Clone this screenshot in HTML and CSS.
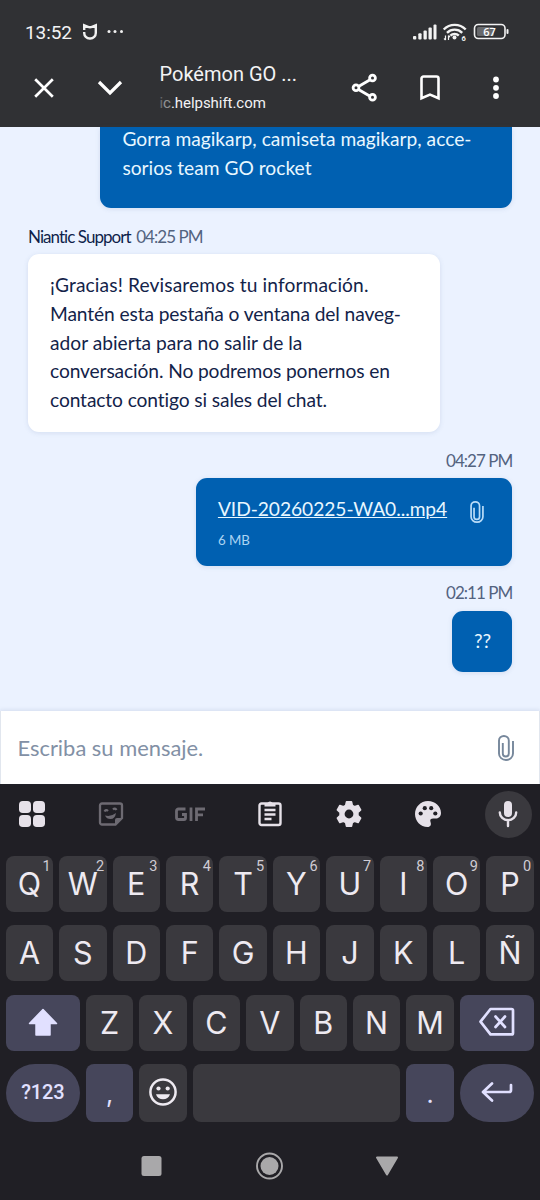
FILE: index.html
```html
<!DOCTYPE html>
<html lang="es">
<head>
<meta charset="utf-8">
<title>Pokémon GO</title>
<link rel="stylesheet" href="styles.css">
</head>
<body>
<header class="top">
  <div class="status">
    <span class="clock">13:52</span>
    <svg class="status-left" width="44" height="20" viewBox="0 0 44 20" fill="none" stroke="#f1f1f1" stroke-width="2.400"><path d="M2.200 8V3.200L6 4.800q2 .8 4 0l3.800-1.600V11a5.500 5.500 0 0 1-5.500 5.500h-.6A5.500 5.500 0 0 1 2.200 11v-1"/><g fill="#f1f1f1" stroke="none"><circle cx="27" cy="9.500" r="1.500"/><circle cx="33" cy="9.500" r="1.500"/><circle cx="39.500" cy="9.500" r="1.500"/></g></svg>
    <svg class="status-right" width="98" height="22" viewBox="0 0 98 22"><g fill="#f3f3f3"><rect x="1" y="15" width="3.300" height="3.500" rx="1"/><rect x="6.300" y="12.300" width="3.300" height="6.200" rx="1"/><rect x="11.500" y="9.500" width="3.300" height="9" rx="1"/><rect x="16.500" y="6.500" width="3.300" height="12" rx="1"/><rect x="21.500" y="3.500" width="3" height="15" rx="1"/><circle cx="42.500" cy="16.500" r="2"/></g><g fill="none" stroke="#f3f3f3" stroke-width="2.400"><path d="M31.700 8.500a15.500 15.500 0 0 1 22 0M35 11.800a10.800 10.800 0 0 1 15.200 0M38.400 14.700a6 6 0 0 1 8.400 0"/><path stroke-width="1.200" d="M33.500 14.500v4.500M32 17.500l1.500 1.500M36.500 19V14.500M38 16L36.500 14.500"/><rect x="62.500" y="3.500" width="30.500" height="14" rx="3.800" stroke-width="1.600"/></g><rect x="65" y="6" width="17" height="9" rx="1.500" fill="#68696c"/><rect x="94.500" y="8" width="2" height="5" rx="1" fill="#f3f3f3"/><text class="wifi-gen" x="49.500" y="19.500">6</text><text class="battery" x="77.500" y="14.800" text-anchor="middle">67</text></svg>
  </div>
  <div class="browser">
    <svg class="icon" width="20" height="20" viewBox="0 0 20 20" fill="none" stroke="#fff" stroke-width="2.700"><path d="M1.200 1.200l17.600 17.600M18.800 1.200L1.200 18.800"/></svg>
    <svg class="icon chevron" width="26" height="16" viewBox="0 0 26 16" fill="none" stroke="#fff" stroke-width="3.200"><path d="M2 2l11 11L24 2"/></svg>
    <div class="page-id"><div class="page-title">Pokémon GO ...</div><div class="page-host"><span class="fade-1">i</span><span class="fade-2">c</span>.helpshift.com</div></div>
    <svg class="icon share" width="28" height="30" viewBox="0 0 28 30" fill="none" stroke="#fff" stroke-width="2.800"><path d="M7.500 13.500l12-7M7.500 16.500l12 7"/><circle cx="5" cy="14.700" r="2.900"/><circle cx="21.500" cy="5" r="2.900"/><circle cx="21.500" cy="24.300" r="2.900"/></svg>
    <svg class="icon mark" width="20" height="26" viewBox="0 0 20 26" fill="none" stroke="#fff" stroke-width="2.600"><path d="M1.500 3.500a2 2 0 0 1 2-2h13a2 2 0 0 1 2 2v19.800L10 19.600l-8.500 3.700z"/></svg>
    <svg class="icon more" width="8" height="24" viewBox="0 0 8 24" fill="#fff"><circle cx="4" cy="3.500" r="2.900"/><circle cx="4" cy="11.800" r="2.900"/><circle cx="4" cy="20" r="2.900"/></svg>
  </div>
</header>

<main class="chat">
  <div class="bubble out first"><span class="line l1">Gorra magikarp, camiseta magikarp, acce-</span><span class="line">sorios team GO rocket</span></div>
  <div class="meta"><span class="author">Niantic Support</span><span class="time">04:25 PM</span></div>
  <div class="bubble in"><span class="line loose">¡Gracias! Revisaremos tu información.</span><span class="line tight">Mantén esta pestaña o ventana del naveg-</span><span class="line">ador abierta para no salir de la</span><span class="line tight">conversación. No podremos ponernos en</span><span class="line tight">contacto contigo si sales del chat.</span></div>
  <div class="meta right"><span class="time">04:27 PM</span></div>
  <div class="bubble out file">
    <div><div class="file-name">VID-20260225-WA0...mp4</div><div class="file-size">6 MB</div></div>
    <svg class="clip" width="14" height="22" viewBox="0 0 16 26" fill="none" stroke="#b9dcf8" stroke-width="2"><path d="M4.500 8v10.500a3 3 0 0 0 6.500 0V5.500a5 4.500 0 0 0-10 0v13a7 6.500 0 0 0 14 0V6"/></svg>
  </div>
  <div class="meta right second"><span class="time">02:11 PM</span></div>
  <div class="bubble out short">??</div>
</main>

<div class="composer">
  <span class="placeholder">Escriba su mensaje.</span>
  <svg width="16" height="26" viewBox="0 0 16 26" fill="none" stroke="#76879b" stroke-width="1.900"><path d="M4.800 8v10.500a3 3 0 0 0 6 0V5.500a4.900 4.500 0 0 0-9.800 0v13a7 6.500 0 0 0 14 0V6"/></svg>
</div>

<section class="keyboard">
  <div class="tools">
    <svg class="tool" width="28" height="28" viewBox="0 0 28 28" fill="#e6e1e9"><rect x="1" y="1" width="12" height="12" rx="3.800"/><rect x="15" y="1" width="12" height="12" rx="3.800"/><rect x="1" y="15" width="12" height="12" rx="3.800"/><rect x="15" y="15" width="12" height="12" rx="3.800"/></svg>
    <svg class="tool" width="28" height="28" viewBox="0 0 28 28" fill="none" stroke="#6d6a72" stroke-width="2.300"><path d="M5 3.500h18a2 2 0 0 1 2 2V18l-6.500 6.500H5a2 2 0 0 1-2-2v-17a2 2 0 0 1 2-2z"/><path d="M25 18h-5a2 2 0 0 0-2 2v5z" fill="#6d6a72" stroke="none"/><path d="M7.500 11.500q1.500-2.500 3.500-.5M16 9.500q2-2 3.500.5" stroke-width="2.200"/><path d="M8 15.500q6 1.500 11-2.500-1 6-5.500 6-4 0-5.500-3.500z" fill="#6d6a72" stroke="none"/></svg>
    <svg class="tool" width="32" height="28" viewBox="0 0 32 28" fill="none" stroke="#6d6a72" stroke-width="2.800"><path d="M11.500 9H4.500a2 2 0 0 0-2 2v6.500a2 2 0 0 0 2 2h5.500a1.500 1.500 0 0 0 1.500-1.500v-3.500H8M17 7.500v13.400M22.500 21V9H31M22.500 14.800H29"/></svg>
    <svg class="tool" width="28" height="30" viewBox="0 0 28 30" fill="none" stroke="#e6e1e9" stroke-width="2.400"><rect x="3.500" y="4.500" width="21" height="21.500" rx="2"/><path d="M8.500 11h11M8.500 15.500h11M8.500 20h7"/><path d="M8.500 4h3a2.800 2.800 0 0 1 5 0h3v3.500h-11z" fill="#e6e1e9" stroke="none"/></svg>
    <svg class="tool" width="28" height="28" viewBox="0 0 28 28"><path fill="#e6e1e9" stroke="#e6e1e9" stroke-width="1.600" stroke-linejoin="round" d="M11.500 1.800h5l.8 3.600 2.200 1.300 3.600-1.200 2.500 4.400-2.700 2.500v3.200l2.700 2.500-2.500 4.400-3.600-1.200-2.200 1.300-.8 3.600h-5l-.8-3.600-2.200-1.300-3.600 1.200-2.500-4.400 2.700-2.500v-3.200L2.400 9.900l2.500-4.400 3.600 1.200 2.200-1.300z"/><circle cx="14" cy="14" r="4.400" fill="#201f25"/></svg>
    <svg class="tool" width="28" height="28" viewBox="0 0 28 28"><path fill="#e6e1e9" d="M14 1C6.500 1 1 7 1 14s5.500 13 12.500 13c3.200 0 4-2.500 3-5-.8-2.500.3-3.500 2.800-3.500H22c3 0 5-2.500 5-5.500C27 6 21 1 14 1z"/><g fill="#201f25"><circle cx="6.700" cy="13.500" r="2.100"/><circle cx="10.800" cy="8.200" r="2.100"/><circle cx="17.200" cy="8.200" r="2.100"/><circle cx="21.300" cy="13.500" r="2.100"/></g></svg>
    <span class="mic"><svg width="22" height="30" viewBox="0 0 22 30"><rect x="7" y="2" width="8" height="16" rx="4" fill="#e6e1e9"/><path d="M2.800 13.500a8.200 7.700 0 0 0 16.400 0M11 21v6" fill="none" stroke="#e6e1e9" stroke-width="2.400" stroke-linecap="round"/></svg></span>
  </div>
  <div class="row"><b class="key">Q<i>1</i></b><b class="key">W<i>2</i></b><b class="key">E<i>3</i></b><b class="key">R<i>4</i></b><b class="key">T<i>5</i></b><b class="key">Y<i>6</i></b><b class="key">U<i>7</i></b><b class="key">I<i>8</i></b><b class="key">O<i>9</i></b><b class="key">P<i>0</i></b></div>
  <div class="row"><b class="key">A</b><b class="key">S</b><b class="key">D</b><b class="key">F</b><b class="key">G</b><b class="key">H</b><b class="key">J</b><b class="key">K</b><b class="key">L</b><b class="key">Ñ</b></div>
  <div class="row"><b class="key wide accent"><svg width="32" height="30" viewBox="0 0 32 30"><path d="M16 2.500L29.500 16.500H23V28H9V16.500H2.500z" fill="#e1e0ff" stroke="#e1e0ff" stroke-width="1.500" stroke-linejoin="round"/></svg></b><b class="key">Z</b><b class="key">X</b><b class="key">C</b><b class="key">V</b><b class="key">B</b><b class="key">N</b><b class="key">M</b><b class="key wide accent"><svg width="38" height="30" viewBox="0 0 38 30" fill="none" stroke="#e1e0ff" stroke-width="2.700" stroke-linejoin="round"><path d="M12.500 2h21a1.500 1.500 0 0 1 1.500 1.500v22.400a1.500 1.500 0 0 1-1.500 1.500h-21L2.500 14.700z"/><path d="M17.500 9.500l9.500 10.500M27 9.500L17.500 20" stroke-linecap="round"/></svg></b></div>
  <div class="row last"><b class="key wide accent pill sym">?123</b><b class="key accent punct">,</b><b class="key"><svg width="30" height="30" viewBox="0 0 30 30"><circle cx="15" cy="15" r="12.600" fill="none" stroke="#eeeaf1" stroke-width="2.500"/><g fill="#eeeaf1"><circle cx="10.500" cy="11.500" r="2.100"/><circle cx="19.700" cy="11.500" r="2.100"/><path d="M8 17.300h14c-1 3.300-3.600 5-7 5s-6-1.700-7-5z"/></g></svg></b><b class="key space"></b><b class="key accent punct">.</b><b class="key wide accent pill"><svg width="34" height="22" viewBox="0 0 34 22" fill="none" stroke="#e1e0ff" stroke-width="2.700" stroke-linecap="round" stroke-linejoin="round"><path d="M12 2.500L3 11l9 8.500M3.500 11H29a2 2 0 0 0 2-2V4"/></svg></b></div>
  <nav class="nav"><svg width="270" height="30" viewBox="0 0 270 30" fill="#a9a8aa"><rect x="6.500" y="5" width="20" height="20" rx="2.500"/><circle cx="134.500" cy="15" r="9"/><circle cx="134.500" cy="15" r="12.500" fill="none" stroke="#a9a8aa" stroke-width="1.900"/><path d="M242 6.500h20l-10 17z" stroke="#a9a8aa" stroke-width="2" stroke-linejoin="round"/></svg></nav>
</section>
</body>
</html>
```
FILE: styles.css
```css
* { box-sizing: border-box; }
body { margin: 0; width: 540px; height: 1200px; overflow: hidden; display: flex; flex-direction: column; background: #201f25; font-family: Lato, sans-serif; }
svg { display: block; flex: none; }

.top { height: 127px; background: #303134; color: #f3f3f4; font-family: Roboto, sans-serif; }
.status { height: 56px; padding: 8px 30px 0 25px; display: flex; align-items: center; }
.clock { width: 46px; font-size: 19px; letter-spacing: -.1px; white-space: nowrap; }
.status-left { margin-left: 11px; }
.status-right { margin-left: auto; }
.wifi-gen { font: 700 7.500px Roboto, sans-serif; fill: #f3f3f3; }
.battery { font: 600 11px "Open Sans", sans-serif; fill: #fff; }
.browser { height: 64px; padding-left: 34px; display: flex; align-items: center; }
.chevron { margin-left: 43px; }
.page-id { width: 160px; margin-left: 36.500px; padding-top: 1px; white-space: nowrap; }
.page-title { font-size: 20px; line-height: 30px; }
.page-host { font-size: 15px; line-height: 29px; letter-spacing: -.05px; }
.fade-1 { opacity: .3; }
.fade-2 { opacity: .5; }
.share { margin-left: 31px; }
.mark { margin-left: 41.500px; }
.more { margin-left: 52px; }

.chat { height: 584px; padding: 0 27.600px 0 28px; display: flex; flex-direction: column; background: #ebf2ff; }
.bubble { border-radius: 11px; font-size: 19.200px; line-height: 28.800px; box-shadow: 0 1px 5px rgba(70, 100, 150, .14); }
.out { align-self: flex-end; background: #0060b1; color: #e8f7ff; }
.first { width: 412px; height: 81px; padding: 0 22px; border-radius: 0 0 11px 11px; }
.line { display: block; white-space: nowrap; }
.loose { letter-spacing: .12px; }
.tight { letter-spacing: -.11px; }
.first .l1 { margin-top: -2px; }
.meta { height: 46px; padding-top: 19px; font-size: 17px; line-height: 20px; letter-spacing: -.95px; white-space: nowrap; color: #0f1f4b; }
.time { margin-left: 5.500px; color: #53637f; }
.in { width: 412px; height: 178px; padding: 17px 22px; background: #fff; color: #132349; }
.right { text-align: right; }
.file { width: 316.500px; height: 88px; padding: 17px 28.500px 0 22px; display: flex; justify-content: space-between; }
.file-name { letter-spacing: -.05px; text-decoration: underline; white-space: nowrap; }
.file-size { font-size: 13.300px; line-height: 33px; color: #acd4f3; }
.clip { margin-top: 5.500px; }
.second { height: 45px; padding-top: 17px; }
.short { width: 60px; height: 61px; line-height: 60px; letter-spacing: -.3px; text-align: center; }

.composer { height: 73px; padding: 0 25px 0 16.500px; display: flex; align-items: center; justify-content: space-between; background: #fff; border: 1px solid #e1e6ee; border-width: 0 1px; box-shadow: 0 -1px 4px rgba(80, 100, 140, .15); z-index: 1; }
.placeholder { font-size: 21.900px; color: #8290a5; }

.keyboard { height: 416px; background: #201f25; font-family: Inter, sans-serif; }
.tools { height: 72px; margin: 0 -8px; padding-bottom: 12px; display: grid; grid-template-columns: repeat(6, 79.300px) 81px; align-items: center; justify-items: center; }
.mic { width: 47px; height: 47px; border-radius: 50%; background: #3a393e; display: grid; place-items: center; }
.row { height: 56px; margin: 0 6.200px 13.400px 5.800px; display: flex; gap: 6px; }
.key { position: relative; flex: 0 0 47.400px; border-radius: 8px; background: #3a393e; color: #eeeaf1; display: grid; place-items: center; padding-bottom: 1px; font-size: 30.500px; font-weight: 400; }
.key i { position: absolute; top: 2px; right: 2.500px; font: 400 14.500px/18px Roboto, sans-serif; color: #d0ccd4; }
.wide { flex: 1 1 0; }
.accent { background: #46465b; color: #e1e0ff; }
.last { height: 57.500px; margin-bottom: 0; }
.pill { border-radius: 29px; }
.sym { font: 500 20px Roboto, sans-serif; letter-spacing: -.2px; }
.space { flex-basis: 207.600px; }
.punct { padding-top: 4px; font-size: 25px; }
.nav { padding: 29.500px 0 0 135px; }
```
